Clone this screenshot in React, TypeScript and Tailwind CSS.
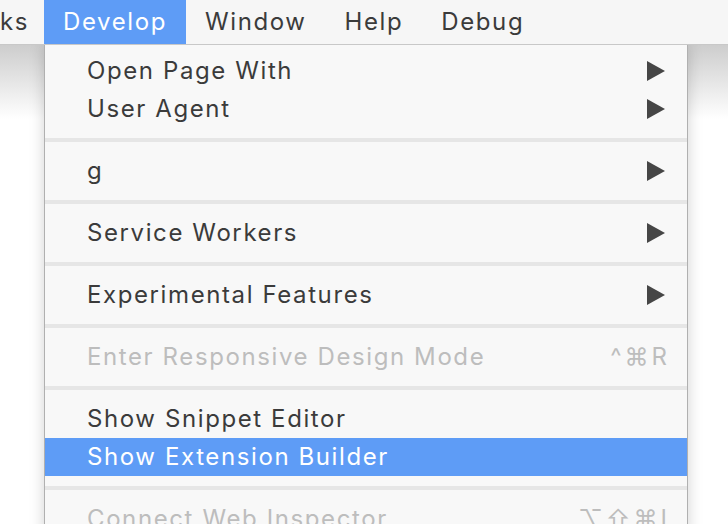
type Item = {
  label: string;
  submenu?: boolean;
  disabled?: boolean;
  active?: boolean;
  shortcut?: string;
};

const sections: Item[][] = [
  [{ label: "Open Page With", submenu: true }, { label: "User Agent", submenu: true }],
  [{ label: "g", submenu: true }],
  [{ label: "Service Workers", submenu: true }],
  [{ label: "Experimental Features", submenu: true }],
  [{ label: "Enter Responsive Design Mode", disabled: true, shortcut: "^⌘R" }],
  [{ label: "Show Snippet Editor" }, { label: "Show Extension Builder", active: true }],
  [{ label: "Connect Web Inspector", disabled: true, shortcut: "⌥⇧⌘I" }],
];

function Arrow() {
  return (
    <svg width="18" height="20" viewBox="0 0 18 20" className="shrink-0">
      <polygon points="0,0 18,10 0,20" fill="#464646" />
    </svg>
  );
}

function Row({ item }: { item: Item }) {
  const color = item.active ? "text-white" : item.disabled ? "text-[#bdbdbd]" : "text-[#3b3b3b]";
  return (
    <div
      className={`h-[38px] flex items-center justify-between pl-[42px] pr-[22px] ${
        item.active ? "bg-[#5e9cf6]" : ""
      } ${color}`}
    >
      <span>{item.label}</span>
      {item.submenu && <Arrow />}
      {item.shortcut && <span className="tracking-[3px] -mr-[5px]">{item.shortcut}</span>}
    </div>
  );
}

export default function App() {
  return (
    <div
      className="w-[728px] h-[524px] overflow-hidden bg-white flex flex-col text-[24px] leading-none tracking-[1.6px]"
      style={{ fontFamily: "Inter, 'DejaVu Sans', sans-serif" }}
    >
      <div className="h-[45px] shrink-0 flex items-stretch bg-[#f6f6f6] border-b border-[#c8c8c8] text-[#3b3b3b] z-10">
        <div className="flex items-center pr-[15px]">ks</div>
        <div className="flex items-center px-[19px] bg-[#5e9cf6] text-white">Develop</div>
        <div className="flex items-center px-[19px]">Window</div>
        <div className="flex items-center px-[19px]">Help</div>
        <div className="flex items-center px-[19px]">Debug</div>
      </div>
      <div className="flex-1 flex bg-gradient-to-b from-[#cdcdcd] via-white via-[15%] to-white">
        <div className="w-[44px] shrink-0" />
        <div className="w-[644px] shrink-0 bg-[#f8f8f8] border-x border-[#b0b0b0] pt-[7px] shadow-[0_0_14px_rgba(0,0,0,0.18)]">
          {sections.map((sec, i) => (
            <div key={i}>
              {i > 0 && <div className="h-[4px] my-[10px] bg-[#e6e6e6]" />}
              {sec.map((item) => (
                <Row key={item.label} item={item} />
              ))}
            </div>
          ))}
        </div>
      </div>
    </div>
  );
}
